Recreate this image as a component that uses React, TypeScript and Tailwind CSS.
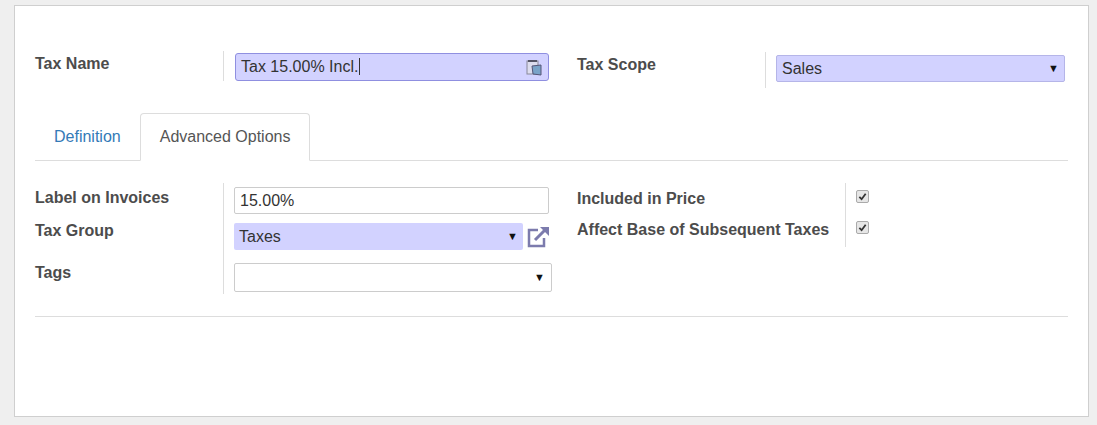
import React from "react";

const F = { fontFamily: '"Liberation Sans", Arial, sans-serif' };

function Check() {
  return (
    <span className="inline-flex h-[13px] w-[13px] items-center justify-center rounded-[2px] border border-[#aaa] bg-[#e6e6e6]">
      <svg width="9" height="9" viewBox="0 0 10 10"><path d="M1.5 5.5 L4 8 L8.5 2" stroke="#333" strokeWidth="2" fill="none" /></svg>
    </span>
  );
}

function Caret() {
  return <span className="text-[11px] text-[#111]">▼</span>;
}

export default function App() {
  return (
    <div style={F} className="h-[425px] w-[1097px] bg-[#efefef] pl-[14px] pr-[8px] pt-[5px]">
      <div style={F} className="h-[412px] border border-[#cfcfcf] bg-white px-[20px] pt-[46px] text-[#4c4c4c]">
        <div className="flex items-start">
          <div className="flex w-[188px] items-start text-[16px] font-bold">Tax Name</div>
          <div className="flex h-[30px] w-[326px] border-l border-[#ddd] pl-[11px] -mt-[1px] items-start pt-[2px]">
            <div className="flex h-[28px] w-[315px] items-center justify-between rounded-[3px] border border-[#8f8fe0] bg-[#d2d2ff] px-[5px] text-[16px] text-[#333]">
              <span>Tax 15.00% Incl.<span className="border-l border-[#333] ml-[1px]"></span></span>
              <svg width="18" height="18" viewBox="0 0 18 18"><rect x="2" y="3" width="11" height="13" fill="#dde" stroke="#889" /><rect x="3" y="2" width="9" height="2" fill="#556" /><path d="M7 8 L16 7 L16 17 L8 16 Z" fill="#7aa3c8" stroke="#557" /></svg>
            </div>
          </div>
          <div className="ml-[28px] w-[188px] pt-[1px] text-[16px] font-bold">Tax Scope</div>
          <div className="flex h-[36px] border-l border-[#ddd] pl-[10px] pt-[3px]">
            <div className="flex h-[27px] w-[289px] items-center justify-between rounded-[2px] border border-[#b5b5e8] bg-[#d2d2ff] px-[5px] text-[16px] text-[#333]">
              <span>Sales</span><Caret />
            </div>
          </div>
        </div>

        <div className="mt-[25px] flex h-[48px] border-b border-[#ddd]">
          <div className="flex items-center px-[19px] text-[16px] text-[#337ab7]">Definition</div>
          <div className="-mb-px flex items-center rounded-t-[4px] border border-b-white border-[#ddd] bg-white px-[19px] text-[16px] text-[#555]">Advanced Options</div>
        </div>

        <div className="mt-[22px] flex items-start">
          <div className="flex">
            <div className="flex w-[188px] flex-col text-[16px] font-bold">
              <div className="h-[36px] pt-[3px]">Label on Invoices</div>
              <div className="h-[42px]">Tax Group</div>
              <div className="h-[32px]">Tags</div>
            </div>
            <div className="flex flex-col border-l border-[#ddd] pl-[10px] pt-[4px] h-[111px]">
              <div className="flex h-[27px] w-[315px] items-center rounded-[2px] border border-[#ccc] px-[5px] text-[16px] text-[#333]">15.00%</div>
              <div className="mt-[9px] flex items-center">
                <div className="flex h-[27px] w-[289px] items-center justify-between rounded-[2px] bg-[#d2d2ff] px-[5px] text-[16px] text-[#333]">
                  <span>Taxes</span><Caret />
                </div>
                <svg className="ml-[2px]" width="26" height="24" viewBox="0 0 26 24"><path d="M13 5 H4 V21 H19 V13" stroke="#7c7bad" strokeWidth="2.5" fill="none" /><path d="M10 15 L22 3" stroke="#7c7bad" strokeWidth="3" /><path d="M15 2 H24 V11 Z" fill="#7c7bad" /></svg>
              </div>
              <div className="mt-[13px] flex h-[29px] w-[318px] items-center justify-end rounded-[2px] border border-[#ccc] px-[6px]"><Caret /></div>
            </div>
          </div>
          <div className="ml-[25px] flex">
            <div className="flex w-[268px] flex-col pt-[4px] text-[16px] font-bold">
              <div className="h-[31px]">Included in Price</div>
              <div>Affect Base of Subsequent Taxes</div>
            </div>
            <div className="flex h-[64px] flex-col gap-[18px] border-l border-[#ddd] pl-[10px] pt-[7px]">
              <Check /><Check />
            </div>
          </div>
        </div>

        <div className="mt-[22px] border-b border-[#ddd]" />
      </div>
    </div>
  );
}
